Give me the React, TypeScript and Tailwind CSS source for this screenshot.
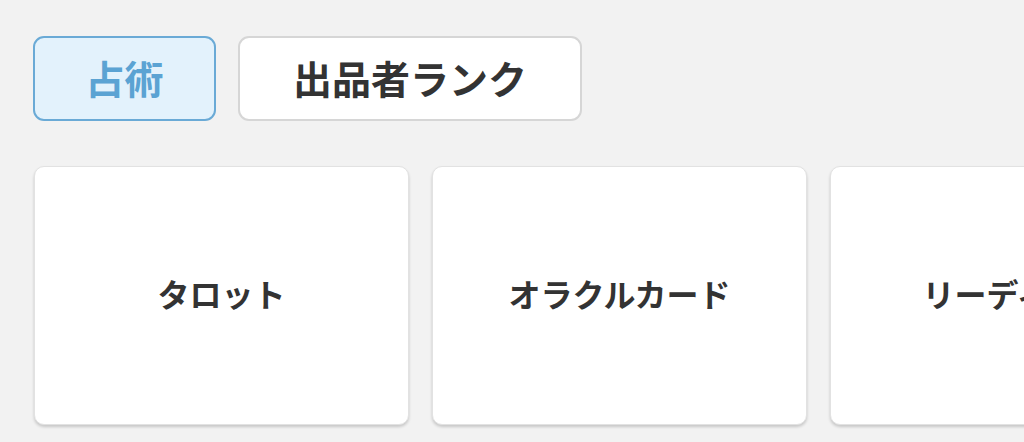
const FONT = "font-['Noto_Sans_CJK_JP','Noto_Sans',sans-serif]";

const tabs = [
    { label: "占術", active: true, width: "w-[183px]" },
    { label: "出品者ランク", active: false, width: "w-[344px]" },
];

const cards = ["タロット", "オラクルカード", "リーディング"];

const App = () => {
    return (
        <div className={`h-[442px] w-[1024px] overflow-hidden bg-[#f2f2f2] ${FONT}`}>
            <div className="flex gap-[22px] pl-[33px] pt-[36px]">
                {tabs.map((t) => (
                    <button
                        key={t.label}
                        className={
                            t.active
                                ? `${t.width} h-[85px] shrink-0 rounded-[11px] border-2 border-[#6aaad6] bg-[#e3f2fc] pb-[3px] text-[39px] font-bold leading-none text-[#5ba3d3]`
                                : `${t.width} h-[85px] shrink-0 rounded-[11px] border-2 border-[#d6d6d6] bg-white pb-[3px] text-[39px] font-bold leading-none text-[#333333]`
                        }
                    >
                        {t.label}
                    </button>
                ))}
            </div>
            <div className="flex gap-[23px] pl-[34px] pt-[45px]">
                {cards.map((c) => (
                    <div
                        key={c}
                        className="flex h-[259px] w-[375px] shrink-0 items-center justify-center rounded-[10px] border border-[#e2e2e2] bg-white pb-[6px] shadow-[0_2px_3px_rgba(0,0,0,0.18)]"
                    >
                        <span className="whitespace-nowrap text-[32px] font-bold text-[#333333]">{c}</span>
                    </div>
                ))}
            </div>
        </div>
    );
};

export default App;
